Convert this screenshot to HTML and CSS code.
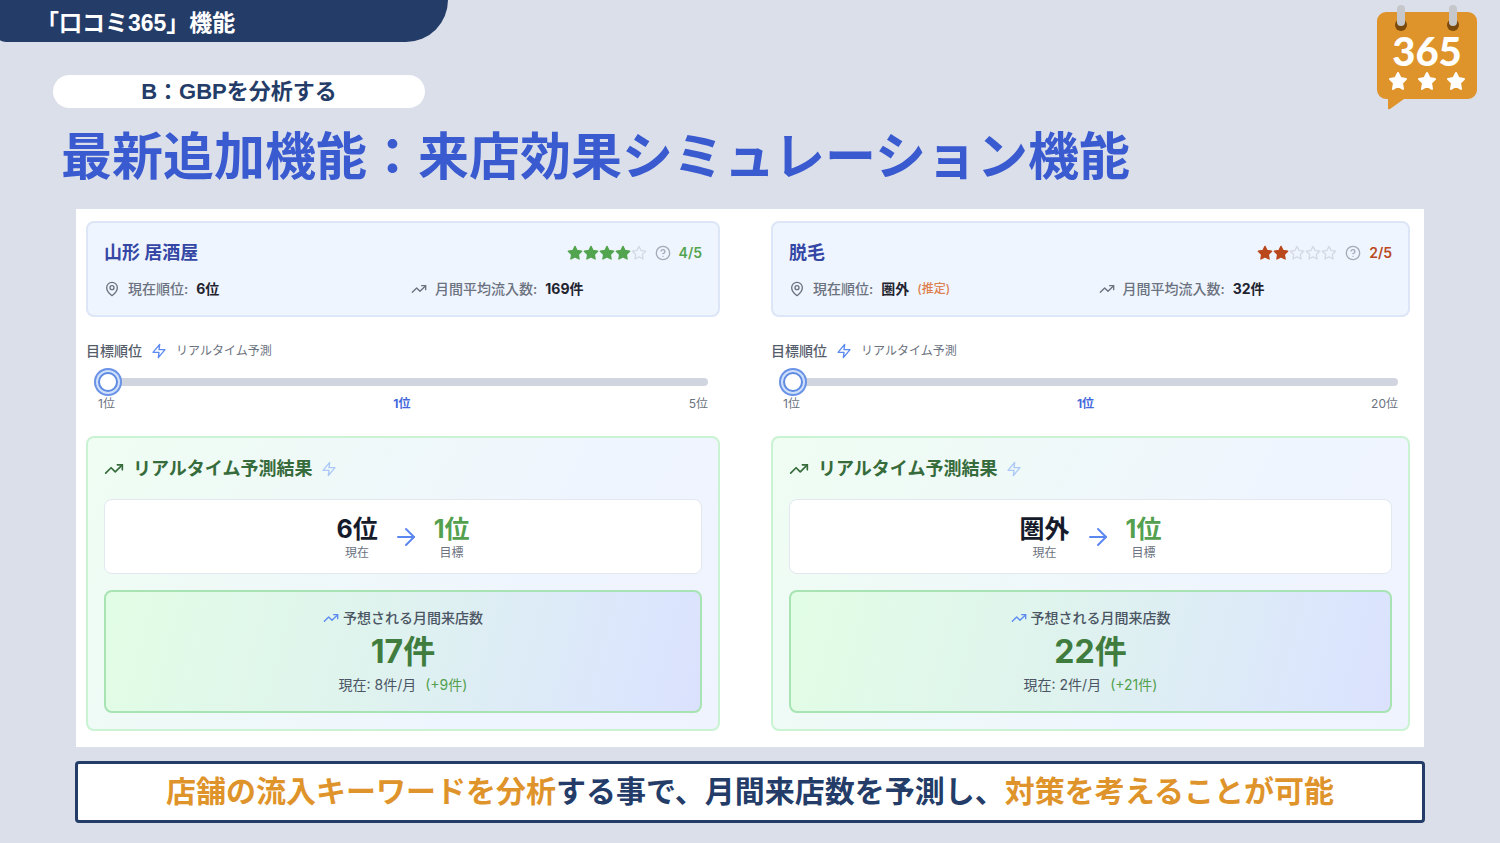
FILE: index.html
```html
<!DOCTYPE html>
<html lang="ja">
<head>
<meta charset="utf-8">
<meta name="viewport" content="width=device-width, initial-scale=1">
<title>「口コミ365」機能</title>
<link rel="stylesheet" href="styles.css">
</head>
<body>
<svg class="sprite" aria-hidden="true">
  <symbol id="pin" viewBox="0 0 24 24"><path d="M20 10c0 6-8 12-8 12s-8-6-8-12a8 8 0 0 1 16 0Z"/><circle cx="12" cy="10" r="3"/></symbol>
  <symbol id="trend" viewBox="0 0 24 24"><path d="m22 7-8.500 8.500-5-5L2 17"/><path d="M16 7h6v6"/></symbol>
  <symbol id="zap" viewBox="0 0 24 24"><path d="M13 2 3 14h9l-1 8 10-12h-9l1-8z"/></symbol>
  <symbol id="help" viewBox="0 0 24 24"><circle cx="12" cy="12" r="10"/><path d="M9.090 9a3 3 0 0 1 5.830 1c0 2-3 3-3 3"/><path d="M12 17h.01"/></symbol>
  <symbol id="star" viewBox="0 0 24 24"><path d="m12 2 3.090 6.260L22 9.270l-5 4.870 1.180 6.880L12 17.770l-6.180 3.250L7 14.140 2 9.270l6.910-1.010L12 2z"/></symbol>
  <symbol id="arrow" viewBox="0 0 24 24"><path d="M4 12h16"/><path d="m12 4 8 8-8 8"/></symbol>
</svg>

<header class="topbar">「口コミ365」機能</header>

<svg class="logo" viewBox="0 0 104 108" role="img" aria-label="365">
  <path fill="#df942b" d="M10 8h82a9 9 0 0 1 9 9v69a9 9 0 0 1-9 9H28L14 105q-2 1-2-1V95h-2a9 9 0 0 1-9-9V17a9 9 0 0 1 9-9z"/>
  <circle cx="25" cy="21" r="6" fill="#7a4a0c"/><circle cx="77" cy="21" r="6" fill="#7a4a0c"/>
  <rect x="21" y="1" width="8" height="21" rx="4" fill="#c5c7cb"/><rect x="73" y="1" width="8" height="21" rx="4" fill="#c5c7cb"/>
  <text class="logo-text" x="51" y="62" text-anchor="middle">365</text>
  <g fill="#fff" stroke="#fff" stroke-width="2" stroke-linejoin="round">
    <path id="s" d="m22 69 2.500 5 5.500 1-4 4 1 6-5-3-5 3 1-6-4-4 5.500-1z"/>
    <use href="#s" x="29"/><use href="#s" x="58"/>
  </g>
</svg>

<main class="slide">
  <div class="tag">B：GBPを分析する</div>
  <h1 class="headline">最新追加機能：来店効果シミュレーション機能</h1>

  <div class="board">
    <section class="sim">
      <div class="summary">
        <div class="summary-head">
          <h2 class="keyword">山形 居酒屋</h2>
          <div class="rating good">
            <span class="stars"><svg class="icon on"><use href="#star"/></svg><svg class="icon on"><use href="#star"/></svg><svg class="icon on"><use href="#star"/></svg><svg class="icon on"><use href="#star"/></svg><svg class="icon off"><use href="#star"/></svg></span>
            <svg class="icon help"><use href="#help"/></svg>
            <span>4/5</span>
          </div>
        </div>
        <div class="facts">
          <div class="fact"><svg class="icon"><use href="#pin"/></svg><span>現在順位:</span><strong>6位</strong></div>
          <div class="fact"><svg class="icon"><use href="#trend"/></svg><span>月間平均流入数:</span><strong>169件</strong></div>
        </div>
      </div>
      <div class="goal">
        <label for="goal-a">目標順位</label><svg class="icon blue"><use href="#zap"/></svg><small>リアルタイム予測</small>
      </div>
      <div class="slider">
        <input id="goal-a" type="range" min="1" max="5" value="1">
        <div class="scale"><span>1位</span><b>1位</b><span>5位</span></div>
      </div>
      <div class="result">
        <h3 class="result-title"><svg class="icon large"><use href="#trend"/></svg>リアルタイム予測結果<svg class="icon pale"><use href="#zap"/></svg></h3>
        <div class="shift">
          <div class="rank"><b>6位</b><span>現在</span></div>
          <svg class="icon arrow"><use href="#arrow"/></svg>
          <div class="rank target"><b>1位</b><span>目標</span></div>
        </div>
        <div class="forecast">
          <div class="forecast-label"><svg class="icon blue"><use href="#trend"/></svg>予想される月間来店数</div>
          <div class="visits">17件</div>
          <div class="compare"><span>現在: 8件/月</span><span class="plus">(+9件)</span></div>
        </div>
      </div>
    </section>

    <section class="sim">
      <div class="summary">
        <div class="summary-head">
          <h2 class="keyword">脱毛</h2>
          <div class="rating poor">
            <span class="stars"><svg class="icon on"><use href="#star"/></svg><svg class="icon on"><use href="#star"/></svg><svg class="icon off"><use href="#star"/></svg><svg class="icon off"><use href="#star"/></svg><svg class="icon off"><use href="#star"/></svg></span>
            <svg class="icon help"><use href="#help"/></svg>
            <span>2/5</span>
          </div>
        </div>
        <div class="facts">
          <div class="fact"><svg class="icon"><use href="#pin"/></svg><span>現在順位:</span><strong>圏外</strong><small class="guess">(推定)</small></div>
          <div class="fact"><svg class="icon"><use href="#trend"/></svg><span>月間平均流入数:</span><strong>32件</strong></div>
        </div>
      </div>
      <div class="goal">
        <label for="goal-b">目標順位</label><svg class="icon blue"><use href="#zap"/></svg><small>リアルタイム予測</small>
      </div>
      <div class="slider">
        <input id="goal-b" type="range" min="1" max="20" value="1">
        <div class="scale"><span>1位</span><b>1位</b><span>20位</span></div>
      </div>
      <div class="result">
        <h3 class="result-title"><svg class="icon large"><use href="#trend"/></svg>リアルタイム予測結果<svg class="icon pale"><use href="#zap"/></svg></h3>
        <div class="shift">
          <div class="rank"><b>圏外</b><span>現在</span></div>
          <svg class="icon arrow"><use href="#arrow"/></svg>
          <div class="rank target"><b>1位</b><span>目標</span></div>
        </div>
        <div class="forecast">
          <div class="forecast-label"><svg class="icon blue"><use href="#trend"/></svg>予想される月間来店数</div>
          <div class="visits">22件</div>
          <div class="compare"><span>現在: 2件/月</span><span class="plus">(+21件)</span></div>
        </div>
      </div>
    </section>
  </div>

  <p class="message"><em>店舗の流入キーワードを分析</em>する事で、月間来店数を予測し、<em>対策を考えることが可能</em></p>
</main>
</body>
</html>
```

FILE: styles.css
```css
* { box-sizing: border-box; }

body {
  margin: 0;
  position: relative;
  min-height: 100vh;
  background: #dbdfea;
  color: #243c68;
  font-family: "Liberation Sans", "Noto Sans CJK JP", sans-serif;
}

h1, h2, h3, p { margin: 0; }

.sprite { position: absolute; width: 0; height: 0; }

.icon {
  flex: none;
  width: 16px;
  height: 16px;
  fill: none;
  stroke: currentColor;
  stroke-width: 2;
  stroke-linecap: round;
  stroke-linejoin: round;
}

.topbar {
  width: 448px;
  max-width: 80%;
  padding: 5px 36px 1px;
  border-radius: 0 0 42px 10px / 0 0 42px 2px;
  background: #243c68;
  color: #fff;
  font-size: 23px;
  font-weight: 700;
  line-height: 36px;
}

.logo {
  position: absolute;
  top: 4px;
  right: 20px;
  width: 104px;
  height: 108px;
}

.logo-text {
  fill: #fff;
  font: 900 40px Lato, sans-serif;
}

.slide { padding: 33px 76px 20px; }

.tag {
  width: 372px;
  margin-left: -23px;
  border-radius: 17px;
  background: #fff;
  font-size: 22px;
  font-weight: 700;
  line-height: 33px;
  text-align: center;
}

.headline {
  margin: 12px 0 13px -15px;
  color: #3a5bd0;
  font-size: 51px;
  font-weight: 700;
  line-height: 76px;
}

.board {
  display: grid;
  grid-template-columns: 634fr 639fr;
  gap: 51px;
  padding: 12px 14px 16px 10px;
  background: #fff;
  color: #6b7280;
  font-family: Inter, "Noto Sans CJK JP", sans-serif;
  font-size: 14px;
  line-height: 20px;
}

.summary {
  display: grid;
  gap: 13px;
  padding: 16px;
  border: 2px solid #dce6f7;
  border-radius: 8px;
  background: #eff5fe;
}

.summary-head {
  display: flex;
  justify-content: space-between;
  align-items: center;
}

.keyword {
  color: #3547a5;
  font-size: 18px;
  font-weight: 700;
  line-height: 27px;
}

.rating {
  display: flex;
  align-items: center;
  gap: 8px;
  font-weight: 600;
}

.good { color: #53a44f; }
.poor { color: #b9481c; }
.stars { display: flex; }
.on { fill: currentColor; }
.off { color: #d5d9e2; }
.help { color: #a3aab8; }

.facts {
  display: grid;
  grid-template-columns: 1fr 1fr;
  gap: 16px;
}

.fact {
  display: flex;
  align-items: center;
  gap: 8px;
}

.fact span { font-weight: 500; }
.fact strong { color: #1f2430; font-weight: 700; }

.guess { color: #dd8050; font-size: 12px; font-weight: 500; }

.goal {
  display: flex;
  align-items: center;
  gap: 9px;
  margin: 24px 0 7px;
}

.goal label { color: #555d6b; font-weight: 500; }
.goal small { font-size: 12px; }
.blue { color: #5c8af0; }

.slider { padding: 0 12px; }

.slider input {
  appearance: none;
  display: block;
  width: 100%;
  height: 28px;
  margin: 0;
  background: none;
}

.slider input::-webkit-slider-runnable-track {
  height: 8px;
  border-radius: 4px;
  background: #d1d5df;
}

.slider input::-webkit-slider-thumb {
  appearance: none;
  width: 20px;
  height: 20px;
  margin-top: -6px;
  border: 2px solid #5f8ae2;
  border-radius: 50%;
  background: #fff;
  box-shadow: 0 0 0 2px #cfe0fb, 0 0 0 4px #6a92e6;
}

.scale {
  display: flex;
  justify-content: space-between;
  margin-top: -1px;
  font-size: 12px;
  line-height: 18px;
}

.scale b { color: #4468dc; }

.result {
  display: grid;
  gap: 16px;
  margin-top: 23px;
  padding: 16px;
  border: 2px solid #c9f3d3;
  border-radius: 8px;
  background: linear-gradient(120deg, #effdf2, #eff5fe 65%, #eff3fe);
}

.result-title {
  display: flex;
  align-items: center;
  gap: 9px;
  color: #366b3b;
  font-size: 18px;
  font-weight: 700;
  line-height: 29px;
}

.large { width: 20px; height: 20px; }
.pale { color: #abc8f8; }

.shift {
  display: flex;
  justify-content: center;
  align-items: center;
  gap: 16px;
  padding: 13px 12px 12px;
  border: 1px solid #e3e8f0;
  border-radius: 8px;
  background: #fff;
}

.rank {
  display: grid;
  justify-items: center;
  font-size: 12px;
  line-height: 16px;
}

.rank b {
  color: #161b2c;
  font-size: 25px;
  line-height: 32px;
}

.target b { color: #53a04e; }

.arrow { width: 24px; height: 24px; color: #5c86f0; }

.forecast {
  display: grid;
  justify-items: center;
  padding: 16px;
  border: 2px solid #a7e3b3;
  border-radius: 8px;
  background: linear-gradient(105deg, #e2fde5, #dff3ee 45%, #dbe5fd 90%, #dbe1fd);
  color: #4b5563;
}

.forecast-label {
  display: flex;
  align-items: center;
  gap: 4px;
  font-weight: 500;
}

.visits {
  margin: 6px 0 5px;
  color: #407c3e;
  font-size: 32px;
  font-weight: 700;
  line-height: 36px;
}

.compare { display: flex; gap: 9px; }
.plus { color: #53a04e; }

.message {
  margin: 14px -1px 0;
  padding: 6px 12px;
  border: 3px solid #243c68;
  border-radius: 4px;
  background: #fff;
  font-size: 30px;
  font-weight: 700;
  line-height: 44px;
  text-align: center;
}

.message em { color: #df942b; font-style: normal; }
```
